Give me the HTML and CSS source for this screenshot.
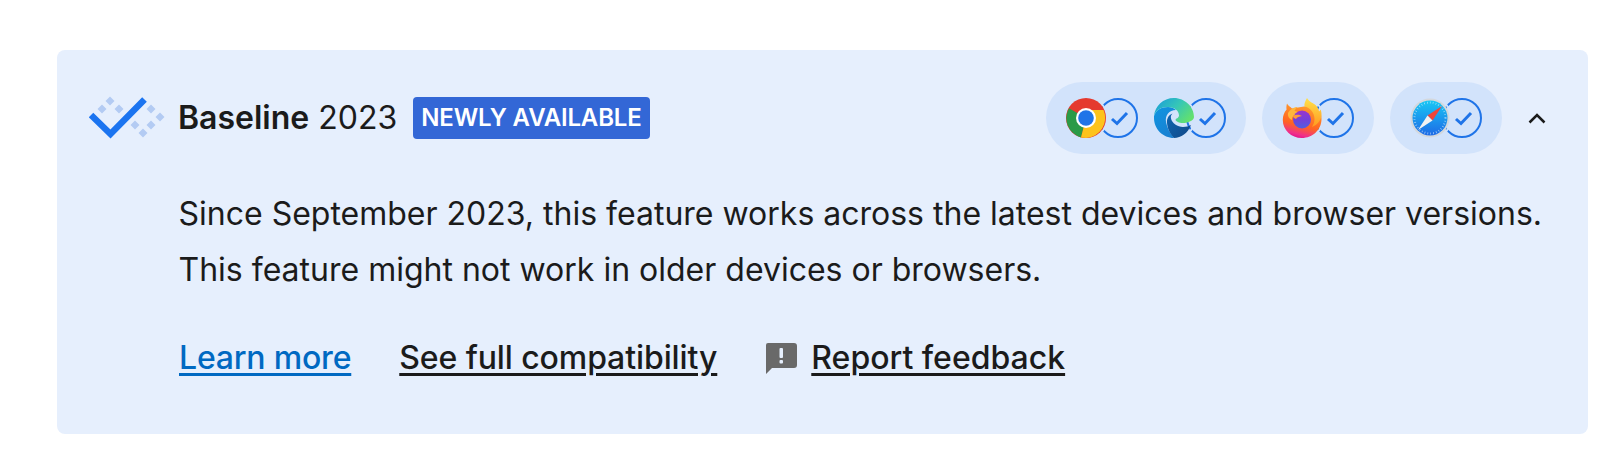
FILE: index.html
```html
<!DOCTYPE html>
<html lang="en">
<head>
<meta charset="utf-8">
<title>Baseline 2023</title>
<link rel="stylesheet" href="styles.css">
</head>
<body>
<section class="card">
  <header class="head">
    <svg class="logo" width="80" height="44" viewBox="0 0 80 44">
      <g fill="#b3cbf3">
        <path d="M21 0.500l4.500 4.500-4.500 4.500-4.500-4.500z"/>
        <path d="M13 8.500l4.500 4.500-4.500 4.500-4.500-4.500z"/>
        <path d="M30 8.500l4.500 4.500-4.500 4.500-4.500-4.500z"/>
        <path d="M62 8.500l4.500 4.500-4.500 4.500-4.500-4.500z"/>
        <path d="M71 16.500l4.500 4.500-4.500 4.500-4.500-4.500z"/>
        <path d="M46 24.500l4.500 4.500-4.500 4.500-4.500-4.500z"/>
        <path d="M62 24.500l4.500 4.500-4.500 4.500-4.500-4.500z"/>
        <path d="M54 32.500l4.500 4.500-4.500 4.500-4.500-4.500z"/>
      </g>
      <path d="M2 19L21.500 38L55.500 3.500" fill="none" stroke="#1b74f0" stroke-width="6.500"/>
    </svg>
    <h2 class="title"><strong>Baseline</strong> 2023</h2>
    <span class="badge">NEWLY AVAILABLE</span>
    <div class="browsers">
      <div class="pill">
        <span class="browser">
          <svg width="40" height="40" viewBox="0 0 40 40">
            <circle cx="20" cy="20" r="20" fill="#e53a2f"/>
            <path d="M20 20L3 10.200A20 20 0 0 0 15 39.400z" fill="#2a9a47"/>
            <path d="M20 20L20.600 12H37.500A20 20 0 0 1 20 40 L15 39.400z" fill="#fdc31c"/>
            <circle cx="20" cy="20" r="10" fill="#fff"/>
            <circle cx="20" cy="20" r="7.800" fill="#1f74e8"/>
          </svg>
        </span>
        <svg class="check" width="40" height="40" viewBox="0 0 40 40"><circle cx="20" cy="20" r="19" fill="none" stroke="#1f74e8" stroke-width="2"/><path d="M14 21l5 4.500L29 15" fill="none" stroke="#1f74e8" stroke-width="3"/></svg>
        <span class="browser second">
          <svg width="40" height="40" viewBox="0 0 40 40">
            <defs>
              <linearGradient id="e1" x1="0.050" y1="0.100" x2="1" y2="0.650"><stop offset="0" stop-color="#1b9fd8"/><stop offset="0.500" stop-color="#35c6b8"/><stop offset="1" stop-color="#62e06f"/></linearGradient>
              <linearGradient id="e2" x1="0.200" y1="0" x2="0.800" y2="1"><stop offset="0" stop-color="#0f93e0"/><stop offset="1" stop-color="#1a7fd0"/></linearGradient>
              <linearGradient id="e3" x1="0" y1="0" x2="1" y2="0.800"><stop offset="0" stop-color="#0e66b0"/><stop offset="1" stop-color="#114a8b"/></linearGradient>
            </defs>
            <path d="M0 18C2 12 7 9 14 9c3 0 6 1 8 3-7 0-11 5-10 12 1 6 4 11 8 16C9 40 0 31 0 20z" fill="url(#e2)"/>
            <path d="M13 25c-.5-4 1.500-8 5.500-9.500-1.500 1.500-2 3-1.500 5 1 4.500 6.500 8.500 12 8.500 3 0 6-1 8-2-3 8-10 13-17 13-3.500-3.500-6.500-9-7-15z" fill="url(#e3)"/>
            <path d="M0 18C1 8 9 0 20 0c11 0 20 9 20 19 0 3.500-6 6-11 6-4 0-7-1.500-7.500-3 0-1.500 3.500-2 3.500-4.500 0-5-5-8.500-11-8.500C7 9 2 12 0 18z" fill="url(#e1)"/>
          </svg>
        </span>
        <svg class="check" width="40" height="40" viewBox="0 0 40 40"><circle cx="20" cy="20" r="19" fill="none" stroke="#1f74e8" stroke-width="2"/><path d="M14 21l5 4.500L29 15" fill="none" stroke="#1f74e8" stroke-width="3"/></svg>
      </div>
      <div class="pill">
        <span class="browser">
          <svg width="40" height="40" viewBox="0 0 40 40">
            <defs>
              <linearGradient id="f1" x1="0.700" y1="0" x2="0.400" y2="1"><stop offset="0" stop-color="#ffa42e"/><stop offset="0.650" stop-color="#ff6422"/><stop offset="0.900" stop-color="#f0308a"/><stop offset="1" stop-color="#e3158a"/></linearGradient>
              <linearGradient id="f2" x1="0.500" y1="0" x2="0.500" y2="1"><stop offset="0" stop-color="#ffe14a"/><stop offset="1" stop-color="#ff9a20"/></linearGradient>
              <linearGradient id="f3" x1="0.500" y1="0" x2="0.500" y2="1"><stop offset="0" stop-color="#9a35cc"/><stop offset="0.500" stop-color="#7440d8"/><stop offset="1" stop-color="#4f5fe0"/></linearGradient>
            </defs>
            <path d="M5 5.500C4.300 8 4.300 10 4.600 11.500 2 14.500.8 18 .8 22c0 10 8.300 18 19 18 11 0 19.700-8.500 19.700-19 0-2.500-.4-4.500-1.200-6.500L25 8 10 10.500C8.500 9 6 7.500 5 5.500z" fill="url(#f1)"/>
            <path d="M25 0c-1.800 3-3 6-2.500 8.500 5.500 1 10 6 10 12.500 0 3-1 5.500-2.500 8 5.500-2 9.500-7 9.500-12.500 0-1.500-.2-3.500-1-5-.5 1-1 1.500-1.500 2C36.500 8 32 6 29.500 4.500 27.500 3.200 26 1.800 25 0z" fill="url(#f2)"/>
            <path d="M6 15c2-3.500 6-6 9.500-6-1.500 1.200-2.500 2.600-3 4 2 .3 4.500 1.300 5 2.500-4 .8-8 2-7.500 6.500C7.500 21 5.500 18.500 6 15z" fill="#ffb63a"/>
            <circle cx="20" cy="21.500" r="9" fill="url(#f3)"/>
            <path d="M11 18c2-1.500 6-2 9 0-3 .5-5 1-6 3-1.500-.5-2.500-1.500-3-3z" fill="#ff9a3a"/>
          </svg>
        </span>
        <svg class="check" width="40" height="40" viewBox="0 0 40 40"><circle cx="20" cy="20" r="19" fill="none" stroke="#1f74e8" stroke-width="2"/><path d="M14 21l5 4.500L29 15" fill="none" stroke="#1f74e8" stroke-width="3"/></svg>
      </div>
      <div class="pill">
        <span class="browser">
          <svg width="40" height="40" viewBox="0 0 40 40">
            <defs>
              <linearGradient id="s1" x1="0.500" y1="0" x2="0.500" y2="1"><stop offset="0" stop-color="#18c8f4"/><stop offset="1" stop-color="#1e6ae6"/></linearGradient>
            </defs>
            <circle cx="20" cy="20" r="19.500" fill="#d4d8dc"/>
            <circle cx="20" cy="20" r="17.500" fill="url(#s1)"/>
            <circle cx="20" cy="20" r="15.500" fill="none" stroke="#dff2ff" stroke-width="2" stroke-dasharray="0.700 2.200" opacity="0.700"/>
            <path d="M32 8L17.500 17.500 22.500 22.500z" fill="#f0453a"/>
            <path d="M8 32L17.500 17.500 22.500 22.500z" fill="#f2f2f2"/>
          </svg>
        </span>
        <svg class="check" width="40" height="40" viewBox="0 0 40 40"><circle cx="20" cy="20" r="19" fill="none" stroke="#1f74e8" stroke-width="2"/><path d="M14 21l5 4.500L29 15" fill="none" stroke="#1f74e8" stroke-width="3"/></svg>
      </div>
      <svg class="chevron" width="18" height="11" viewBox="0 0 18 11"><path d="M1.500 9.500L9 2l7.500 7.500" fill="none" stroke="#1b1b1b" stroke-width="2.500"/></svg>
    </div>
  </header>
  <div class="body">
    <p class="text">Since September 2023, this feature works across the latest devices and browser versions.<br>This feature might not work in older devices or browsers.</p>
    <div class="links">
      <a class="link primary" href="#">Learn more</a>
      <a class="link" href="#">See full compatibility</a>
      <span class="feedback">
        <svg width="32" height="32" viewBox="0 0 32 32"><path d="M3 1h26a3 3 0 0 1 3 3v19a3 3 0 0 1-3 3H7l-6 6V3a2 2 0 0 1 2-2z" fill="#696969"/><rect x="14.500" y="6" width="3.500" height="10" rx="1" fill="#e6effd"/><rect x="14.500" y="18" width="3.500" height="3.500" rx="1" fill="#e6effd"/></svg>
        <a class="link report" href="#">Report feedback</a>
      </span>
    </div>
  </div>
</section>
</body>
</html>
```

FILE: styles.css
```css
* { box-sizing: border-box; }
html, body { margin: 0; padding: 0; background: #fff; }
body {
  padding: 50px 34px 18px 57px;
  font-family: Inter, "Liberation Sans", sans-serif;
  color: #1b1b1b;
}
.card {
  height: 384px;
  padding: 32px 34px 48px 32px;
  background: #e6effd;
  border-radius: 8px;
}
.head { display: flex; align-items: center; height: 72px; }
.logo { display: block; flex: none; margin-right: 9px; }
.title {
  margin: 0 16px 0 0;
  font-size: 32px;
  font-weight: 400;
  line-height: 48px;
  white-space: nowrap;
}
.title strong { font-weight: 600; }
.badge {
  height: 42px;
  padding: 0 8px;
  background: #3367d6;
  border-radius: 4px;
  color: #fff;
  font-size: 24px;
  font-weight: 600;
  letter-spacing: -0.15px;
  line-height: 42px;
  white-space: nowrap;
}
.browsers { display: flex; align-items: center; gap: 16px; margin-left: auto; }
.pill {
  display: flex;
  align-items: center;
  height: 72px;
  padding: 0 20px;
  background: #d2e3fb;
  border-radius: 36px;
}
.browser {
  position: relative;
  z-index: 1;
  display: block;
  width: 40px;
  height: 40px;
  border-radius: 50%;
  box-shadow: 0 0 0 2px #d2e3fb;
}
.browser svg { display: block; }
.browser.second { margin-left: 16px; }
.check { display: block; flex: none; margin-left: -8px; }
.chevron { display: block; margin: 0 8px 0 10px; }
.body { margin: 32px 0 0 90px; }
.text { margin: 0 0 0 -0.5px; font-size: 32px; line-height: 56px; white-space: nowrap; }
.links { display: flex; align-items: center; gap: 48px; margin-top: 32px; height: 56px; }
.link {
  color: #1b1b1b;
  font-size: 32px;
  font-weight: 500;
  letter-spacing: -0.1px;
  line-height: 56px;
  text-decoration: underline;
  text-decoration-thickness: 3px;
  text-underline-offset: 4px;
  white-space: nowrap;
}
.primary { color: #0069c2; letter-spacing: -0.2px; }
.report { letter-spacing: 0; }
.feedback { display: flex; align-items: center; gap: 14px; }
.feedback svg { display: block; flex: none; }
```
